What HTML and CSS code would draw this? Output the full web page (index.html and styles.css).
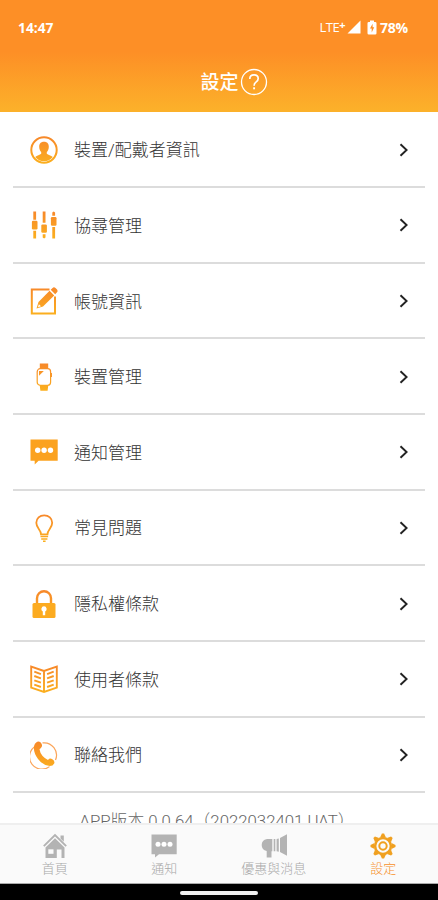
FILE: index.html
```html
<!DOCTYPE html>
<html lang="zh-Hant">
<head>
<meta charset="utf-8">
<title>設定</title>
<link rel="stylesheet" href="styles.css">
</head>
<body>
<svg class="defs" width="0" height="0" aria-hidden="true">
  <defs>
    <linearGradient id="g" gradientUnits="userSpaceOnUse" x1="0" y1="0" x2="0" y2="28"><stop offset="0" stop-color="#f7872a"/><stop offset="1" stop-color="#fbb01e"/></linearGradient>
  </defs>
</svg>
<div class="app">
  <header class="header">
    <div class="status">
      <span class="time">14:47</span>
      <span class="status-right">
        <span class="lte">LTE<sup>+</sup></span>
        <svg class="signal" width="14" height="14" viewBox="0 0 14 14"><path d="M13.500 0.500v13H0.500z" fill="#fff"/></svg>
        <svg class="battery" width="10" height="15" viewBox="0 0 10 15"><path d="M3 0.500h4v1.500h1.200q1.300 0 1.300 1.300v9.900q0 1.300-1.300 1.300H1.800q-1.300 0-1.300-1.300V3.300q0-1.300 1.300-1.300H3z" fill="#fff"/><path d="M5.600 3.800L3 8.600h1.700v3.800L7.200 7.300H5.600z" fill="#fd8f26"/></svg>
        <span class="percent">78%</span>
      </span>
    </div>
    <div class="title">
      <h1>設定</h1>
      <svg width="28" height="28" viewBox="0 0 28 28" fill="none" stroke="#fff"><circle cx="14" cy="14" r="12.500" stroke-width="1.300"/><path d="M9.800 11q0-4.200 4.200-4.200t4.200 3.700q0 2.200-2.200 3.600-1.900 1.200-1.900 3.600" stroke-width="1.700"/><path d="M14.100 19.300v2" stroke-width="1.900"/></svg>
    </div>
  </header>

  <main class="list">
    <a class="row">
      <svg class="icon" viewBox="0 0 28 28"><circle cx="14" cy="14" r="12.700" fill="none" stroke="url(#g)" stroke-width="2"/><path d="M14 5.800c3.300 0 5 2.200 4.800 5.300-.1 2.500-1 4-2 5v1.700c1.200 1.300 4.300 1.400 6 3.300A11.300 11.300 0 0 1 14 25.300a11.300 11.300 0 0 1-8.800-4.200c1.700-1.900 4.800-2 6-3.300v-1.700c-1-1-1.900-2.500-2-5C9 8 10.700 5.800 14 5.800z" fill="url(#g)"/></svg>
      <span class="label">裝置/配戴者資訊</span><svg class="chev" viewBox="0 0 10 14"><path d="M1.500 1.200L7.600 7 1.500 12.800"/></svg>
    </a>
    <a class="row">
      <svg class="icon" viewBox="0 0 28 28" fill="url(#g)"><path d="M3.300 0.500h2.800v8.200H3.300zM3.300 19.800h2.800v7.700H3.300zM12.700 0.500h2.800v11.300h-2.800zM12.700 23.200h2.800v3.300l-1.400 1-1.400-1zM22.300 1.500l1.400-1 1.400 1v3.300h-2.800zM22.300 16h2.800v11.500h-2.800z"/><rect x="1.900" y="9.800" width="5.600" height="8.700" rx="1.200"/><rect x="11.300" y="13.500" width="5.600" height="8.200" rx="1.200"/><rect x="20.900" y="6" width="5.600" height="8.700" rx="1.200"/></svg>
      <span class="label">協尋管理</span><svg class="chev" viewBox="0 0 10 14"><path d="M1.500 1.200L7.600 7 1.500 12.800"/></svg>
    </a>
    <a class="row">
      <svg class="icon" viewBox="0 0 28 28"><path d="M19.500 2.600H1.800v24h23.200V9.500" fill="none" stroke="url(#g)" stroke-width="2"/><path d="M6.500 21.500l2-6.500L19.600 3.800l4.600 4.600L13 19.500zM20.700 2.700L22.600 1q1.400-1.300 2.900.1l1.300 1.200q1.400 1.500.2 2.900l-1.800 2z" fill="url(#g)"/><path d="M7.900 20.200l1-3 2.100 2z" fill="#fff"/></svg>
      <span class="label">帳號資訊</span><svg class="chev" viewBox="0 0 10 14"><path d="M1.500 1.200L7.600 7 1.500 12.800"/></svg>
    </a>
    <a class="row">
      <svg class="icon" viewBox="0 0 28 28"><path d="M9.800 0.500h8.400v4.600H9.800zM9.800 22.900h8.400l-.6 4.800h-7.200z" fill="url(#g)"/><rect x="7.200" y="5.700" width="13.400" height="16.600" rx="3" fill="#fff" stroke="url(#g)" stroke-width="1.200"/><path d="M9 7.900h4.800L9 12.800z" fill="url(#g)"/><path d="M21.500 10v4" stroke="#f8952a" stroke-width="1"/></svg>
      <span class="label">裝置管理</span><svg class="chev" viewBox="0 0 10 14"><path d="M1.500 1.200L7.600 7 1.500 12.800"/></svg>
    </a>
    <a class="row">
      <svg class="icon" viewBox="0 0 28 28"><path d="M0.500 1.500h27.200v21.300H8.600L4.700 26.600v-3.800H0.500z" fill="#fba21f"/><g fill="#fff"><circle cx="7.700" cy="12.200" r="2.700"/><circle cx="14.100" cy="12.200" r="2.700"/><circle cx="20.500" cy="12.200" r="2.700"/></g></svg>
      <span class="label">通知管理</span><svg class="chev" viewBox="0 0 10 14"><path d="M1.500 1.200L7.600 7 1.500 12.800"/></svg>
    </a>
    <a class="row">
      <svg class="icon" viewBox="0 0 28 28" fill="none" stroke="url(#g)"><path d="M11 20.300c0-4.800-4.700-6-4.700-11.500C6.300 4.300 9.800 1.300 14.200 1.300s8 3 8 7.500c0 5.500-4.700 6.700-4.700 11.500z" stroke-width="1.800"/><path d="M10.500 22.600h7.600M11.200 25.100h6.200M13 27.200h2.600" stroke-width="1.500"/></svg>
      <span class="label">常見問題</span><svg class="chev" viewBox="0 0 10 14"><path d="M1.500 1.200L7.600 7 1.500 12.800"/></svg>
    </a>
    <a class="row">
      <svg class="icon" viewBox="0 0 28 28"><path d="M7 14V8.200a7 7 0 0 1 14 0V14" fill="none" stroke="url(#g)" stroke-width="2.400"/><rect x="2.500" y="13" width="23" height="15" rx="1.500" fill="#fcab20"/><path d="M14 16.300a2.700 2.700 0 0 1 1.200 5.100v3.800h-2.400v-3.800A2.700 2.700 0 0 1 14 16.300z" fill="#fff"/></svg>
      <span class="label">隱私權條款</span><svg class="chev" viewBox="0 0 10 14"><path d="M1.500 1.200L7.600 7 1.500 12.800"/></svg>
    </a>
    <a class="row">
      <svg class="icon" viewBox="0 0 28 28" fill="none" stroke="url(#g)"><path d="M14 6L1.200 1.600v21L14 27l12.800-4.400v-21zM14 6v21" stroke-width="1.900"/><path d="M4.300 6.700l6.600 2.400M4.300 11l6.600 2.400M4.300 15.300l6.600 2.400M4.300 19.600l6.600 2.400M23.700 6.700l-6.600 2.400M23.700 11l-6.600 2.400M23.700 15.300l-6.600 2.400M23.700 19.600l-6.600 2.400" stroke-width="1.900"/></svg>
      <span class="label">使用者條款</span><svg class="chev" viewBox="0 0 10 14"><path d="M1.500 1.200L7.600 7 1.500 12.800"/></svg>
    </a>
    <a class="row">
      <svg class="icon" viewBox="0 0 28 28"><path d="M12.500 1.900A12.400 12.400 0 0 1 25.500 19M19.500 25.600A12.400 12.400 0 0 1 4.300 6" fill="none" stroke="#fba55a" stroke-width="1.200"/><path d="M6.200 1.400Q8.500-.4 10.700 1.500Q12.800 3.800 11.600 6.100Q10.800 7.400 9.500 8.200Q10 12 12.600 14.900Q15.200 17.700 18 18.900Q19.800 16.800 22 18Q25.200 19.600 24.200 22.400Q23 25 19.800 25Q13 24.500 8 18Q2.800 10.800 4.200 4.500Q4.700 2.500 6.200 1.400z" fill="url(#g)"/></svg>
      <span class="label">聯絡我們</span><svg class="chev" viewBox="0 0 10 14"><path d="M1.500 1.200L7.600 7 1.500 12.800"/></svg>
    </a>
    <p class="version">APP版本 0.0.64（2022032401.UAT）</p>
  </main>

  <nav class="tabs">
    <a class="tab">
      <svg width="26" height="26" viewBox="0 0 26 26" fill="#b3b3b3"><path d="M1.800 13.200L13 2.100l11.200 11.100" fill="none" stroke="#b3b3b3" stroke-width="1.900"/><path d="M18.500 2.500h3.300v6.300l-3.300-3.300z"/><path d="M13 5.300l9.500 9.300V25h-3v-8.600h-4.700V25H3.500V14.600z"/><path d="M6.300 16.300h5.200v4.500H6.300z" fill="#fafafa"/></svg>
      <span>首頁</span>
    </a>
    <a class="tab">
      <svg width="26" height="26" viewBox="0 0 26 26"><path d="M.5 1.500h25.200v19.700H8l-4 3.400v-3.400H.5z" fill="#b3b3b3"/><g fill="#fff"><circle cx="7" cy="11.200" r="2.500"/><circle cx="13" cy="11.200" r="2.500"/><circle cx="19" cy="11.200" r="2.500"/></g></svg>
      <span>通知</span>
    </a>
    <a class="tab">
      <svg width="26" height="26" viewBox="0 0 26 26" fill="#b3b3b3"><path d="M11.300 6v12.200h-.8v6.300H5.700v-6.600Q.7 17 .7 12T6 6zM12.700 6h1.600v12.200h-1.600zM15.600 6l2.200-.6v13.400l-2.200-.6zM19 5l7-3.800v21.600L19 19z"/></svg>
      <span>優惠與消息</span>
    </a>
    <a class="tab active">
      <svg width="26" height="26" viewBox="-13 -13 26 26"><g fill="#f0a020"><g id="teeth"><path d="M-2.900-8.500L-1.100-12.500H1.100L2.900-8.500z"/><path d="M-2.900-8.500L-1.100-12.500H1.100L2.900-8.500z" transform="rotate(45)"/><path d="M-2.900-8.500L-1.100-12.500H1.100L2.900-8.500z" transform="rotate(90)"/><path d="M-2.900-8.500L-1.100-12.500H1.100L2.900-8.500z" transform="rotate(135)"/></g><use href="#teeth" transform="rotate(180)"/></g><circle r="7.900" fill="#fafafa" stroke="#f0a020" stroke-width="2.500"/><circle r="3.700" fill="none" stroke="#f0a020" stroke-width="2"/></svg>
      <span>設定</span>
    </a>
  </nav>
  <div class="gesture"><i class="pill"></i></div>
</div>
</body>
</html>
```
FILE: styles.css
```css
* { box-sizing: border-box; }
body {
  margin: 0;
  background: #fff;
  font-family: Roboto, "Noto Sans CJK TC", sans-serif;
}
.defs { display: block; }
.app {
  display: flex;
  flex-direction: column;
  width: 438px;
  height: 900px;
  overflow: hidden;
}
.header {
  flex: none;
  height: 111.500px;
  background: linear-gradient(#fd8f26 0, #fd8f26 52px, #fcb12a 111px);
  color: #fff;
}
.status {
  display: flex;
  justify-content: space-between;
  align-items: center;
  height: 54px;
  padding: 0 30px 0 18px;
  font-family: "Open Sans", sans-serif;
  font-size: 13.500px;
  font-weight: 700;
}
.status-right { display: flex; align-items: center; }
.time { font-size: 13.800px; }
.lte { font-size: 13px; font-weight: 400; letter-spacing: -0.500px; line-height: 16px; }
.lte sup { font-size: 11px; font-weight: 700; line-height: 0; vertical-align: 3px; }
.signal { margin-left: 2px; }
.battery { margin: 0 3px 0 6px; }
.percent { font-size: 14px; letter-spacing: -0.200px; }
.title {
  display: flex;
  justify-content: center;
  align-items: center;
  height: 56px;
  padding-left: 30px;
}
h1 { margin: 2px 0 0; font-size: 19px; font-weight: 500; line-height: 28px; }
.title svg { margin-left: 1px; }
.list {
  flex: 1;
  min-height: 0;
  overflow: hidden;
  padding: 1px 13px 0;
}
.row {
  display: flex;
  align-items: center;
  height: 75.630px;
  padding: 1px 16px 0 17px;
  border-bottom: 2px solid #dcdcdc;
}
.icon { width: 28px; height: 28px; flex: none; }
.label {
  flex: 1;
  margin: 1px 0 0 16px;
  font-size: 17px;
  line-height: 24px;
  color: #333;
  font-weight: 300;
}
.chev {
  width: 10px;
  height: 14px;
  fill: none;
  stroke: #222;
  stroke-width: 1.900;
}
.version {
  margin: 15px 0 0;
  padding-right: 4px;
  text-align: center;
  white-space: nowrap;
  font-size: 16.800px;
  line-height: 26px;
  font-weight: 300;
  color: #666;
}
.tabs {
  flex: none;
  display: grid;
  grid-template-columns: repeat(4, 1fr);
  height: 61.500px;
  border-top: 2px solid #efefef;
  border-bottom: 1px solid #aaa;
  background: #fafafa;
}
.tab {
  display: flex;
  flex-direction: column;
  align-items: center;
  padding-top: 8px;
  color: #a8a8a8;
  font-size: 13px;
  line-height: 19px;
  font-weight: 300;
}
.active { color: #f7902a; }
.gesture {
  flex: none;
  display: flex;
  justify-content: center;
  height: 16px;
  padding-top: 7px;
  background: #000;
}
.pill { width: 78px; height: 4px; border-radius: 2px; background: #f0f0f0; }
```
